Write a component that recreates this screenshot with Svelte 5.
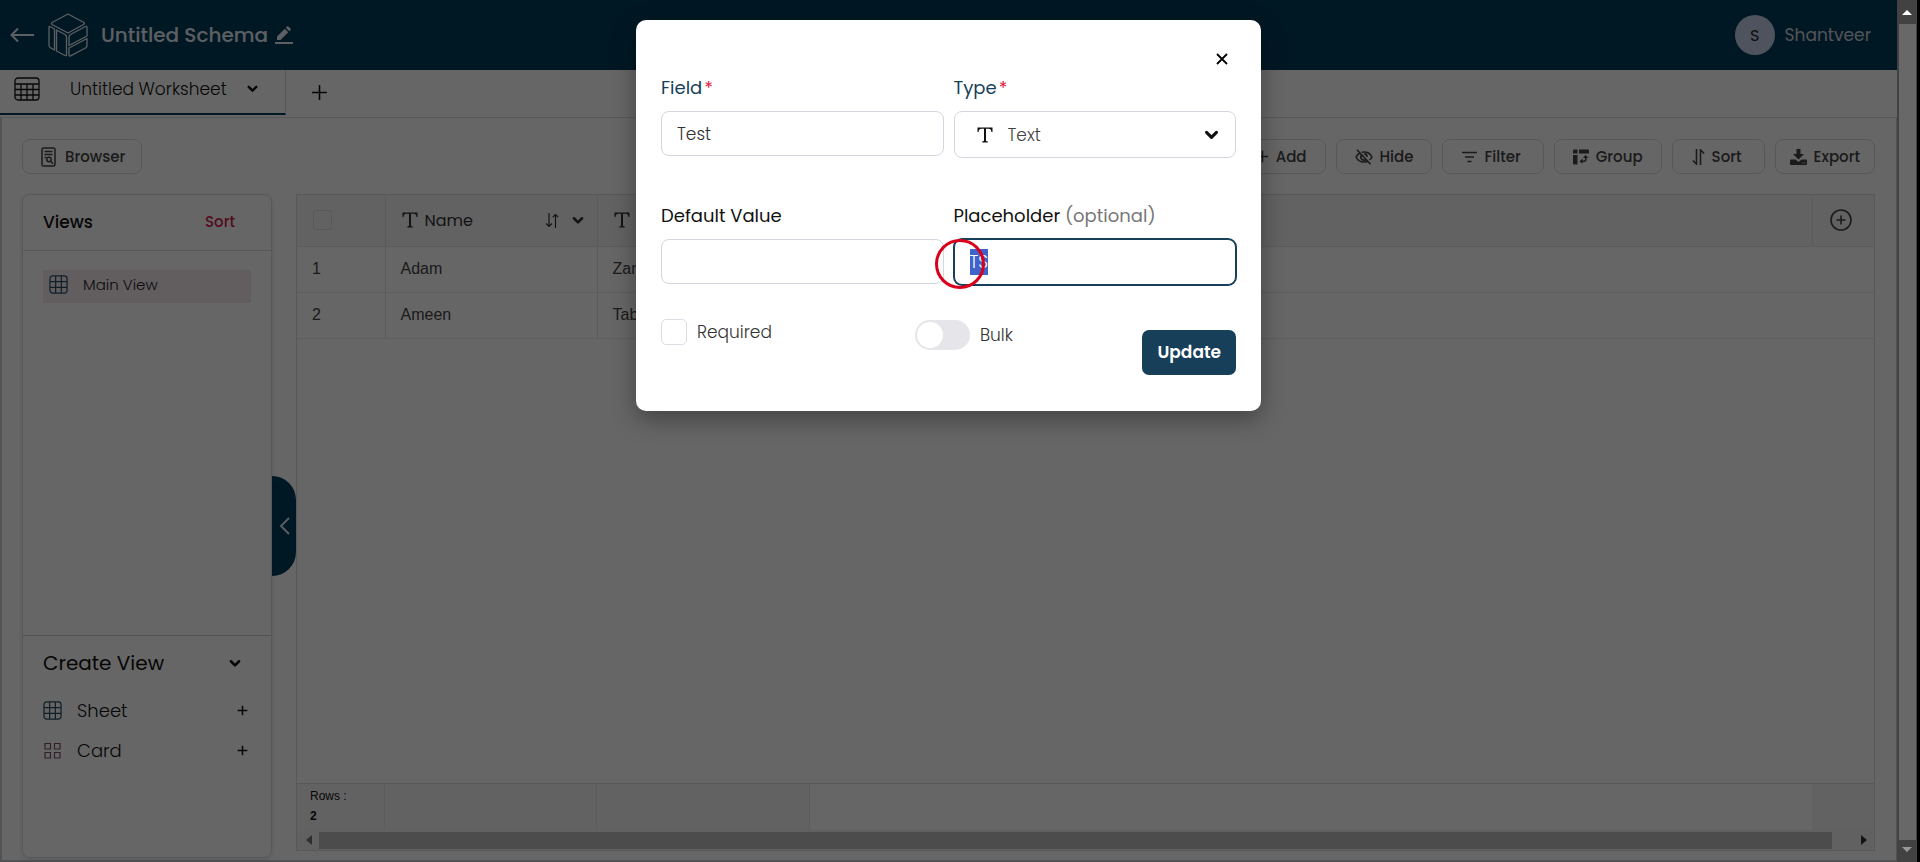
<script>
  import { onMount } from 'svelte';

  let rows = [
    { id: 1, name: 'Adam', other: 'Zar' },
    { id: 2, name: 'Ameen', other: 'Tab' }
  ];

  let field = 'Test';
  let defaultValue = '';
  let placeholderText = 'TS';
  let placeholderInput;

  onMount(() => {
    placeholderInput.focus();
    placeholderInput.select();
  });
</script>

{#snippet chevron(size)}
  <svg width={size} height={size} viewBox="0 0 12 12" fill="none" stroke="currentColor" stroke-width="2.2" stroke-linecap="round" stroke-linejoin="round"><path d="M2.500 4.500L6 8l3.500-3.500" /></svg>
{/snippet}

{#snippet letterT(size)}
  <svg width={size} height={size} viewBox="0 0 16 16" fill="currentColor"><path d="M0.5 0.5h15v4.4h-1.1c-.2-2.400-.9-3.200-3-3.200H9v11.600c0 .9.3 1.100 1.800 1.200v1H5.200v-1c1.500-.1 1.800-.3 1.800-1.200V1.700H4.600c-2.100 0-2.800.8-3 3.200H.5z" /></svg>
{/snippet}

{#snippet sheetIcon(size)}
  <svg width={size} height={size} viewBox="0 0 20 20" fill="none" stroke="currentColor" stroke-width="1.3"><rect x="1" y="1" width="18" height="18" rx="3" /><path d="M7 1v18M13 1v18M1 7h18M1 13h18" /></svg>
{/snippet}

{#snippet plus(size, weight)}
  <svg width={size} height={size} viewBox="0 0 16 16" fill="none" stroke="currentColor" stroke-width={weight}><path d="M8 1v14M1 8h14" /></svg>
{/snippet}

<div class="window">
  <div class="app">
    <header>
      <button class="bare back" aria-label="Back">
        <svg width="24" height="16" viewBox="0 0 24 16" fill="none" stroke="currentColor" stroke-width="2"><path d="M8 1.500L1.500 8 8 14.500M2 8h22" /></svg>
      </button>
      <svg class="cube" width="40" height="44" viewBox="0 0 40 44" fill="none" stroke="currentColor" stroke-width="1.300" stroke-linejoin="round">
        <path d="M20 1L36 9.500Q37 10.500 35.500 11.500L20 20 4 11.500Q3 10.500 4 9.500Z" />
        <path d="M2 13.500Q1 13 1 14.500V32Q1 33.500 2 34.500L6.500 37V16Z" />
        <path d="M8.500 17L17 21.500Q18.500 22.500 18.500 24V42Q18.500 43 17 42.500L8.500 38Z" />
        <path d="M37.500 13.500Q39 13 39 14.500V23L21 32.500V24Q21 22.500 22.500 21.500Z" />
        <path d="M39 25.500V32.500Q39 34 37.500 35L22.500 42.800Q21 43.500 21 42V35Z" />
      </svg>
      <h1>Untitled Schema</h1>
      <button class="bare" aria-label="Rename schema">
        <svg width="18" height="18" viewBox="0 0 18 18" fill="currentColor"><path d="M2 10.500L9.800 2.700l3.500 3.500L5.500 14H2zM10.800 1.700L12 .5q.7-.7 1.400 0l2.100 2.100q.7.700 0 1.400L14.300 5.200zM0 16h18v2H0z" /></svg>
      </button>
      <div class="user">
        <span class="avatar">S</span>
        <span>Shantveer</span>
      </div>
    </header>

    <nav>
      <div class="tab">
        <svg width="26" height="24" viewBox="0 0 26 24" fill="none" stroke="currentColor" stroke-width="1.300"><rect x="1" y="1" width="24" height="22" rx="3" /><path d="M1 7h24M1 12.500h24M1 18h24M7 7v16M13 7v16M19 7v16" /></svg>
        <span>Untitled Worksheet</span>
        <button class="bare" aria-label="Worksheet menu">{@render chevron(13)}</button>
      </div>
      <button class="bare new-tab" aria-label="Add worksheet">{@render plus(17, 1.500)}</button>
    </nav>

    <main>
      <div class="toolbar">
        <button class="tool browser">
          <svg width="15" height="20" viewBox="0 0 15 20" fill="none" stroke="currentColor" stroke-width="1.500"><rect x="1" y="1" width="13" height="18" rx="1.500" /><path d="M3.500 4.500h8M3.500 7.500h8M3.500 10.500h2" /><circle cx="8" cy="12.500" r="2.200" /><path d="M9.600 14.200l2.400 2.600" /></svg>
          Browser
        </button>
        <div class="tools">
          <button class="tool">{@render plus(13, 1.800)} Add</button>
          <button class="tool">
            <svg width="18" height="16" viewBox="0 0 18 16" fill="none" stroke="currentColor" stroke-width="1.600"><path d="M2 .8l13.500 14.400M5 4C3 5 1.700 6.700 1.100 8c1.300 3 4.200 5 7.900 5 1.200 0 2.300-.2 3.300-.6M6.800 3.200C7.500 3 8.200 3 9 3c3.700 0 6.600 2 7.900 5-.5 1.200-1.300 2.200-2.300 3M6.300 6.200a3.200 3.200 0 0 0 4.300 4.500M9.300 4.900a3.200 3.200 0 0 1 2.900 3" /></svg>
            Hide
          </button>
          <button class="tool roomy">
            <svg width="15" height="12" viewBox="0 0 15 12" fill="none" stroke="currentColor" stroke-width="1.500"><path d="M0 1.500h15M3 6h9M5.500 10.500h4" /></svg>
            Filter
          </button>
          <button class="tool">
            <svg width="16" height="16" viewBox="0 0 16 16" fill="currentColor"><path d="M0 1.500Q0 .5 1 .5h3.500v4H0zM6 .5h9q1 0 1 1v3H6zM0 6h4.500v9.500H1q-1 0-1-1z" /><path d="M12.500 6l3 3h-2v1.500q0 2.500-2.500 2.500H9.500v2l-3-2.800 3-2.800v2H11q1 0 1-1V9h-2z" /></svg>
            Group
          </button>
          <button class="tool roomy">
            <svg width="13" height="16" viewBox="0 0 13 16" fill="none" stroke="currentColor" stroke-width="1.600"><path d="M4.500 0v15L.8 11.500M8.500 16V1l3.700 3.500" /></svg>
            Sort
          </button>
          <button class="tool snug">
            <svg width="17" height="16" viewBox="0 0 17 16" fill="currentColor"><path d="M6.500 0h4v5h3.500L8.500 10.500 3 5h3.500z" /><path d="M1 10.500h4.500l3 2.500 3-2.500H16q1 0 1 1v3.500q0 1-1 1H1q-1 0-1-1v-3.500q0-1 1-1zm11.500 3v1h1v-1zm2 0v1h1v-1z" fill-rule="evenodd" /></svg>
            Export
          </button>
        </div>
      </div>

      <div class="workspace">
        <aside>
          <div class="views-head">
            <h2>Views</h2>
            <button class="bare sort-link">Sort</button>
          </div>
          <div class="views">
            <button class="view">{@render sheetIcon(19)} Main View</button>
          </div>
          <div class="create">
            <button class="bare create-head"><span>Create View</span>{@render chevron(14)}</button>
            <button class="bare create-row"><i class="sheet">{@render sheetIcon(19)}</i><span>Sheet</span>{@render plus(11, 2.200)}</button>
            <button class="bare create-row">
              <i class="card"><svg width="19" height="17" viewBox="0 0 19 17" fill="none" stroke="currentColor" stroke-width="1.200"><path d="M2 1.500h5.500v5.500H2zM11.500 1.500H17v5.500h-5.500zM2 10.500h5.500V16H2zM11.500 10.500H17V16h-5.500z" /></svg></i>
              <span>Card</span>{@render plus(11, 2.200)}
            </button>
          </div>
        </aside>

        <button class="handle" aria-label="Collapse views">
          <svg width="11" height="18" viewBox="0 0 11 18" fill="none" stroke="currentColor" stroke-width="2"><path d="M10 1L2 9l8 8" /></svg>
        </button>

        <section>
          <table>
            <colgroup><col class="c-num" /><col class="c-text" /><col class="c-text" /><col /><col class="c-add" /></colgroup>
            <thead>
              <tr>
                <th><input class="check small" type="checkbox" aria-label="Select all rows" /></th>
                <th>
                  <div class="col-head">
                    {@render letterT(16)}<span>Name</span>
                    <svg class="col-sort" width="14" height="15" viewBox="0 0 14 15" fill="none" stroke="currentColor" stroke-width="1.200"><path d="M4 0v13.500M1 10.500l3 3 3-3M10.500 15V1.500M7.800 4.200l2.700-2.700 2.700 2.700" /></svg>
                    {@render chevron(14)}
                  </div>
                </th>
                <th><div class="col-head">{@render letterT(16)}</div></th>
                <th></th>
                <th class="add">
                  <button class="bare" aria-label="Add column"><svg width="22" height="22" viewBox="0 0 22 22" fill="none" stroke="currentColor" stroke-width="1.600"><circle cx="11" cy="11" r="10" /><path d="M11 6.500v9M6.500 11h9" /></svg></button>
                </th>
              </tr>
            </thead>
            <tbody>
              {#each rows as row (row.id)}
                <tr><td>{row.id}</td><td>{row.name}</td><td>{row.other}</td><td></td><td></td></tr>
              {/each}
            </tbody>
          </table>
          <div class="empty"></div>
          <div class="summary">
            <div>Rows :<b>2</b></div><div></div><div></div><div class="clear"></div><div class="last"></div>
          </div>
          <div class="hscroll">
            <svg width="8" height="10" viewBox="0 0 8 10" fill="#777"><path d="M7 0v10L1 5z" /></svg>
            <div class="thumb"></div>
            <svg width="8" height="10" viewBox="0 0 8 10" fill="#333"><path d="M1 0v10l6-5z" /></svg>
          </div>
        </section>
      </div>
    </main>

    <div class="overlay">
      <form class="modal">
        <button type="button" class="bare close" aria-label="Close">
          <svg width="12" height="12" viewBox="0 0 12 12" fill="none" stroke="currentColor" stroke-width="1.800"><path d="M1 1l10 10M11 1L1 11" /></svg>
        </button>
        <div class="fields">
          <div class="field">
            <label class="navy" for="field">Field<em>*</em></label>
            <input id="field" type="text" bind:value={field} />
          </div>
          <div class="field">
            <label class="navy" for="type">Type<em>*</em></label>
            <div class="select">
              <i>{@render letterT(16)}</i>
              <select id="type"><option>Text</option></select>
              <i class="arrow">{@render chevron(17)}</i>
            </div>
          </div>
          <div class="field">
            <label for="default">Default Value</label>
            <input id="default" type="text" bind:value={defaultValue} />
          </div>
          <div class="field">
            <label for="placeholder">Placeholder <small>(optional)</small></label>
            <div class="target">
              <input id="placeholder" type="text" bind:value={placeholderText} bind:this={placeholderInput} />
              <span class="ring"></span>
            </div>
          </div>
        </div>
        <div class="actions">
          <label class="option"><input class="check" type="checkbox" />Required</label>
          <label class="option bulk"><input class="toggle" type="checkbox" />Bulk</label>
          <button type="button" class="update">Update</button>
        </div>
      </form>
    </div>
  </div>

  <div class="vscroll">
    <svg width="10" height="6" viewBox="0 0 10 6" fill="#fff"><path d="M0 6l5-5 5 5z" /></svg>
    <div class="thumb"></div>
    <svg width="10" height="6" viewBox="0 0 10 6" fill="#999"><path d="M0 0l5 5 5-5z" /></svg>
  </div>
</div>

<style>
  :global(body) { background: #000; }
  * { box-sizing: border-box; }
  h1, h2 { margin: 0; }
  svg { display: block; flex: none; }
  i { display: block; flex: none; }
  button, input, select { font: inherit; color: inherit; }
  .bare { border: 0; background: none; padding: 0; text-align: left; }

  .window { display: flex; min-height: 100vh; font-family: Poppins, Inter, sans-serif; color: #111; }
  .app { position: relative; flex: 1; min-width: 0; display: flex; flex-direction: column; background: #fff; }

  header { display: flex; align-items: center; height: 70px; padding: 0 26px 0 10px; background: #003c5a; color: #e8eef8; }
  .cube { margin: 0 13px 0 14px; }
  h1 { font-size: 20px; font-weight: 500; margin-right: 7px; }
  .user { display: flex; align-items: center; gap: 10px; margin-left: auto; font-size: 17px; color: #cfd3da; }
  .avatar { display: grid; place-items: center; width: 40px; height: 40px; border-radius: 50%; background: #c4cfe8; color: #222; font-size: 16px; }

  nav { display: flex; height: 48px; border-bottom: 1px solid #d8dee6; }
  .tab { display: flex; align-items: center; width: 286px; height: 45px; padding: 0 26px 6px 14px; border-bottom: 2px solid #003c5a; border-right: 1px solid #d4d8e0; font-size: 17px; font-weight: 300; }
  .tab span { margin: 0 auto 0 30px; }
  .new-tab { margin: 0 0 2px 25px; }

  main { flex: 1; display: flex; flex-direction: column; gap: 20px; padding: 21px 21px 2px 20px; border: solid #c8ccd2; border-width: 0 1px 2px 2px; }
  .toolbar { display: flex; justify-content: space-between; }
  .tools { display: flex; gap: 10px; }
  .tool { display: flex; align-items: center; gap: 7px; height: 35px; padding: 0 18px; border: 1px solid #d8dade; border-radius: 8px; background: none; font-size: 15px; font-weight: 500; color: #444; }
  .roomy { padding: 0 22px 0 19px; }
  .snug { padding: 0 14px; }
  .browser { padding: 0 16px 0 18px; gap: 9px; }

  .workspace { flex: 1; display: flex; }
  aside { display: flex; flex-direction: column; width: 250px; border: 1px solid #dadde2; border-radius: 8px; box-shadow: 0 1px 4px #0002; }
  .views-head { display: flex; align-items: center; justify-content: space-between; height: 56px; padding: 0 36px 2px 20px; border-bottom: 1px solid #dadde2; }
  h2 { font-size: 17px; font-weight: 500; }
  .sort-link { font-size: 15px; font-weight: 500; color: #cc1f4f; }
  .views { flex: 1; padding: 19px 20px; }
  .view { display: flex; align-items: center; gap: 15px; width: 100%; height: 33px; padding: 0 6px 4px; border: 0; background: #f5eaee; font-size: 15px; font-weight: 300; text-align: left; color: #222; }
  .view :global(svg), .sheet { color: #285064; }
  .card { color: #7a5068; }
  .create { height: 222px; padding: 13px 23px 0 20px; border-top: 1px solid #c8ccd2; }
  .create-head, .create-row { display: flex; align-items: center; width: 100%; height: 40px; font-size: 18px; font-weight: 300; }
  .create-head { height: 28px; margin-bottom: 13px; padding-right: 6px; justify-content: space-between; font-size: 20px; font-weight: 400; }
  .create-row span { margin: 0 auto 0 15px; }

  .handle { align-self: center; display: grid; place-items: center; width: 24px; height: 100px; padding: 0; border: 0; border-radius: 0 25px 25px 0; background: #003c5a; color: #dde6f0; }

  section { flex: 1; min-width: 0; display: flex; flex-direction: column; margin-bottom: 7px; border: 1px solid #dadde2; }
  table { width: 100%; table-layout: fixed; border-collapse: collapse; font-family: "Liberation Sans", Arial, sans-serif; font-size: 16px; color: #444; }
  .c-num { width: 88px; }
  .c-text { width: 212px; }
  .c-add { width: 62px; }
  th { height: 51px; padding: 0 12px 0 16px; background: #f5f5f5; border-bottom: 1px solid #e4e4e6; text-align: left; }
  th:nth-child(-n+2), td:nth-child(-n+2), th.add { border-right: 1px solid #e4e4e6; }
  th.add { padding: 0 4px 0 0; border-left: 1px solid #e4e4e6; border-right: 0; }
  th.add button { display: block; margin: 0 auto; }
  td { height: 46px; padding: 0 15px; border-bottom: 1px solid #ebebed; white-space: nowrap; }
  .col-head { display: flex; align-items: center; gap: 7px; font-family: Poppins, Inter, sans-serif; font-weight: 400; font-size: 16px; color: #333; }
  .col-sort { margin-left: auto; margin-right: 5px; }
  .empty { flex: 1; }
  .summary { display: grid; grid-template-columns: 88px 212px 213px 1fr 62px; height: 47px; border-top: 1px solid #dcdcde; font: 12px/20px "Liberation Sans", Arial, sans-serif; }
  .summary div { padding: 2px 13px; background: #f4f4f4; border-right: 1px solid #e6e6e8; }
  .summary .clear { background: #fff; border: 0; }
  .summary .last { border: 0; }
  b { display: block; }
  .hscroll { display: flex; align-items: center; height: 20px; padding: 0 6px 0 8px; background: #f2f2f2; }
  .hscroll .thumb { flex: 1; height: 17px; margin: 0 28px 0 6px; background: #bdbdbd; }

  .overlay { position: absolute; inset: 0; display: flex; justify-content: center; align-items: flex-start; padding-top: 20px; background: rgba(0, 0, 0, 0.6); }
  .modal { width: 625px; padding: 33px 25px 36px; border-radius: 10px; background: #fff; box-shadow: 0 8px 24px rgba(0, 0, 0, 0.35); font-size: 17px; font-weight: 300; color: #333; }
  .close { display: block; margin: 0 8px 0 auto; color: #000; }
  .fields { display: grid; grid-template-columns: 1fr 1fr; column-gap: 10px; row-gap: 46px; padding-top: 11px; }
  .field { height: 82px; }
  .field label { display: block; height: 35px; line-height: 24px; font-size: 18px; font-weight: 400; color: #111; }
  .field .navy { color: #173f5a; }
  em { margin-left: 2px; font-style: normal; color: #dc143c; }
  small { font-size: 18px; color: #777; }
  input[type='text'] { display: block; width: 100%; height: 45px; padding: 0 15px; border: 1px solid #d6d6e0; border-radius: 8px; background: #fff; line-height: 26px; outline: 0; }
  #placeholder { height: 46px; border-color: #173f5a; box-shadow: 0 0 0 1px #173f5a; }
  #placeholder::selection { background: #3f63c8; color: #fff; }
  .select { display: flex; align-items: center; height: 47px; padding: 0 15px 0 22px; border: 1px solid #d6d6e0; border-radius: 8px; color: #111; }
  select { flex: 1; margin-left: 15px; padding: 0; border: 0; background: none; appearance: none; color: #444; outline: 0; font-weight: 300; }
  .target { position: relative; }
  .ring { position: absolute; left: -19px; top: 0; width: 50px; height: 50px; border: 3px solid #d9001b; border-radius: 50%; }
  .actions { display: flex; align-items: flex-start; padding-top: 32px; }
  .option { display: flex; align-items: center; gap: 10px; height: 27px; }
  .bulk { margin: 2px auto 0 143px; height: 30px; }
  .check { appearance: none; width: 26px; height: 26px; margin: 0; border: 1px solid #dcdce4; border-radius: 5px; background: #fff; }
  .small { display: block; width: 19px; height: 20px; border-radius: 3px; background: none; }
  .toggle { appearance: none; width: 55px; height: 30px; margin: 0; padding: 2px; border-radius: 15px; background: #e5e5ea; }
  .toggle::before { content: ''; display: block; width: 26px; height: 26px; border-radius: 50%; background: #fff; }
  .update { height: 45px; margin-top: 12px; padding: 0 15px 2px; border: 0; border-radius: 7px; background: #173f5a; color: #fff; font-size: 17px; font-weight: 600; }

  .vscroll { display: flex; flex-direction: column; align-items: center; justify-content: space-between; width: 20px; margin-right: 3px; padding: 9px 0; background: #424242; }
  .vscroll .thumb { flex: 1; width: 17px; margin: 9px 0 7px; background: #686868; }
</style>
